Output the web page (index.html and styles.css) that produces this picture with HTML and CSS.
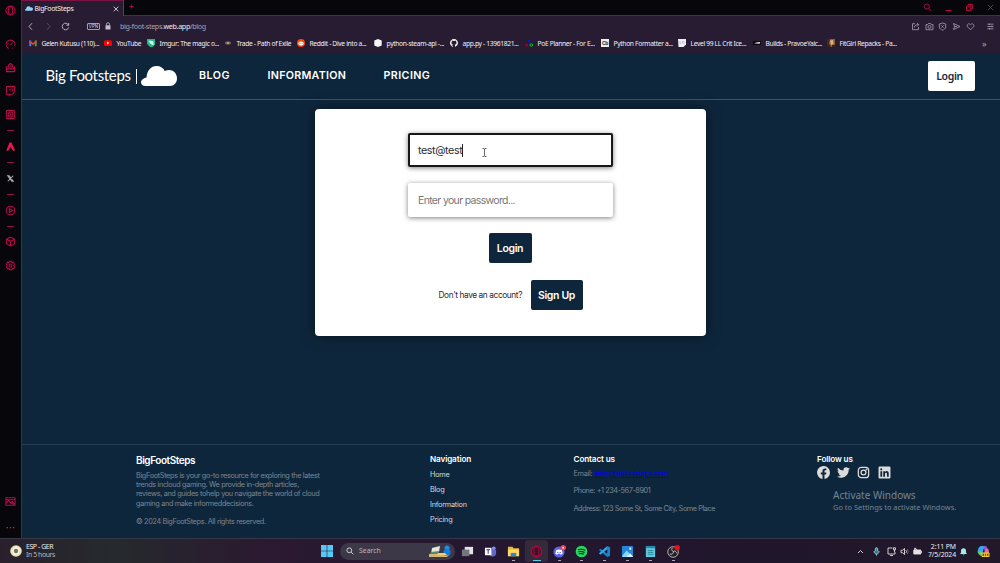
FILE: index.html
```html
<!DOCTYPE html>
<html lang="en">
<head>
<meta charset="utf-8">
<title>BigFootSteps</title>
<link rel="stylesheet" href="styles.css">
</head>
<body>
<div class="desktop">
  <div class="browser">
    <aside class="sidebar">
      <svg class="ic opera" viewBox="0 0 12 12"><circle cx="6" cy="6" r="5"/><ellipse cx="6" cy="6" rx="2.4" ry="4.2"/></svg>
      <svg class="ic gauge" viewBox="0 0 12 12"><path d="M4 10.3A4.8 4.8 0 1 1 10.4 8M6 6.5 8.2 4M3 6.3l.6-1.5M7.5 10.2l1-.5"/></svg>
      <svg class="ic bag" viewBox="0 0 12 12"><path d="M1.500 5.500h9v5h-9zM1 7.500h10M4 5.500V3l2-1.500L8 3v2.500M5 3.500h2"/></svg>
      <svg class="ic twitch" viewBox="0 0 12 12"><path d="M2 1.500h8.500v6L8 10H6l-1.500 1.500V10H1.500V3zM5.500 3.500v3M8 3.500v3"/></svg>
      <svg class="ic cam" viewBox="0 0 12 12"><rect x="1.500" y="1.500" width="9" height="9" rx="1.500"/><circle cx="6" cy="6" r="2.600"/><circle cx="6" cy="6" r=".7"/><path d="M3 3h.2M9 3h.2M3 9h.2M9 9h.2"/></svg>
      <i class="dash d1"></i>
      <svg class="ic arrowup" viewBox="0 0 12 12"><path class="solid" d="M5 1.500h2l4 8.500-2 .8L6 6.500 3.300 10.800 1.500 10z"/></svg>
      <i class="dash d2"></i>
      <svg class="ic xlogo" viewBox="0 0 12 12"><path d="M3 3h1.500L9 9H7.500zM9 3 3 9"/></svg>
      <i class="dash d3"></i>
      <svg class="ic player" viewBox="0 0 12 12"><circle cx="6" cy="6" r="4.700"/><path d="M4.700 3.900v4.200L8.500 6z"/></svg>
      <i class="dash d4"></i>
      <svg class="ic cube" viewBox="0 0 12 12"><path d="M6 1.200 10.500 3.500v5L6 10.800 1.500 8.500v-5zM1.500 3.500 6 5.800l4.500-2.300M6 5.800v5"/></svg>
      <svg class="ic gear" viewBox="0 0 12 12"><path d="M4.800 1.300h2.400l.5 1.500 1.600-.3 1.200 2L9.500 6l1 1.500-1.200 2-1.600-.3-.5 1.500H4.800l-.5-1.500-1.600.3-1.200-2 1-1.500-1-1.500 1.200-2 1.600.3z"/><circle cx="6" cy="6" r="1.600"/></svg>
      <svg class="ic photos" viewBox="0 0 12 12"><path d="M1 2h10v8H1zM1 4h10M1 8l3-3 2.500 3L8 6l3 3M6.500 6.500l3 3"/></svg>
      <svg class="ic more" viewBox="0 0 12 12"><path class="solid" d="M1.800 5.500h1.400v1.200H1.800zM5.300 5.500h1.400v1.200H5.300zM8.800 5.500h1.400v1.200H8.800z"/></svg>
    </aside>

    <div class="window">
      <div class="tabstrip">
        <div class="tab">
          <svg class="tabcloud" viewBox="0 0 36 20"><use href="#cloud"/></svg>
          <span class="tabname">BigFootSteps</span>
          <svg class="close" viewBox="0 0 6 6"><path d="M.7.7l4.600 4.600M5.300.7.7 5.300"/></svg>
        </div>
        <svg class="plus" viewBox="0 0 6 6"><path d="M3 .5v5M.5 3h5"/></svg>
        <div class="wincontrols">
          <svg viewBox="0 0 9 9"><circle cx="3.800" cy="3.500" r="2.500"/><path d="M5.700 5.400 8.200 8"/></svg>
          <svg viewBox="0 0 9 9"><path d="M1.500 7.500h6"/></svg>
          <svg viewBox="0 0 9 9"><path d="M1.500 3.300h4.200v4.200H1.500zM3 3V1.500h4.500V6H6"/></svg>
          <svg viewBox="0 0 9 9"><path d="M1.700 1.700l5.600 5.600M7.300 1.700 1.700 7.300"/></svg>
        </div>
      </div>

      <div class="toolbar">
        <svg class="nv back" viewBox="0 0 9 9"><path d="M6 1.200 3 4.500 6 7.800"/></svg>
        <svg class="nv fwd" viewBox="0 0 9 9"><path d="M3 1.200 6 4.500 3 7.800"/></svg>
        <svg class="nv reload" viewBox="0 0 9 9"><path d="M7.500 3A3.300 3.300 0 1 0 7.700 5.500M7.700 1v2.300H5.400"/></svg>
        <span class="vpn">VPN</span>
        <svg class="lock" viewBox="0 0 6 8"><path d="M1.500 3.500V2.200a1.500 1.500 0 0 1 3 0v1.300"/><path class="body" d="M.5 3.300h5v4.200h-5z"/></svg>
        <span class="url">big-foot-steps.<b>web.app</b>/blog</span>
        <div class="tools">
          <svg viewBox="0 0 9 9"><path d="M4 1.700H1.500v6h6V5M3.500 5.500c0-2 1-2.800 4-2.800M6 1l1.700 1.700L6 4.500"/></svg>
          <svg viewBox="0 0 9 9"><path d="M1 2.500h1.700l.7-1h2.200l.7 1H8v5.200H1z"/><circle cx="4.500" cy="4.900" r="1.500"/></svg>
          <svg viewBox="0 0 9 9"><path d="M4.500 1 7.700 2v3c0 1.700-2 2.700-3.200 3.200C3.300 7.700 1.300 6.700 1.300 5V2zM3.400 3.400l2.200 2.200M5.600 3.400 3.400 5.600"/></svg>
          <svg viewBox="0 0 9 9"><path d="M1.500 1.500 8 4.500 1.500 7.500 2.500 4.500zM2.500 4.500H5"/></svg>
          <svg viewBox="0 0 9 9"><path d="M4.500 7.800 1.500 4.800C.2 3.300 2.500.3 4.500 2.700 6.500.3 8.800 3.300 7.500 4.800z"/></svg>
          <svg class="menu" viewBox="0 0 9 9"><path d="M1.500 2.200h6M1.500 4.500h6M1.500 6.800h6M3 1.500v1.400M6 3.800v1.400M3.500 6.100v1.400"/></svg>
        </div>
      </div>

      <div class="bookmarks">
        <div class="bm"><svg viewBox="0 0 8 8"><path d="M.3 1.500h1.900v5.700H.3z" fill="#4285f4"/><path d="M5.800 1.500h1.900v5.700H5.800z" fill="#34a853"/><path d="M.3 1.300 4 4l3.700-2.700v2L4 6 .3 3.300z" fill="#ea4335"/></svg><span>Gelen Kutusu (110)...</span></div>
        <div class="bm"><svg viewBox="0 0 8 8"><rect y="1.200" width="8" height="5.800" rx="1.500" fill="#f00"/><path d="M3 2.700v2.700l2.400-1.300z" fill="#fff"/></svg><span>YouTube</span></div>
        <div class="bm"><svg viewBox="0 0 8 8"><path d="M0 0h8v5.500L5.500 8H3L0 5z" fill="#20b88a"/><path d="M1.300 2 3 1.500l3.500 1v4L3.500 4.700z" fill="#d8f5e9"/></svg><span>Imgur: The magic o...</span></div>
        <div class="bm"><svg viewBox="0 0 8 8"><ellipse cx="4" cy="4" rx="3" ry="1.700" fill="#7b6656"/><circle cx="4" cy="4" r="1" fill="#b8a893"/></svg><span>Trade - Path of Exile</span></div>
        <div class="bm"><svg viewBox="0 0 8 8"><circle cx="4" cy="4" r="4" fill="#ff4500"/><ellipse cx="4" cy="4.500" rx="2.700" ry="1.900" fill="#fff"/><path d="M2.400 4h1v.8h-1zM4.600 4h1v.8h-1z" fill="#f40"/></svg><span>Reddit - Dive into a...</span></div>
        <div class="bm"><svg viewBox="0 0 8 8"><path d="m4 0 3.700 1.600v4.800L4 8 .3 6.400V1.600z" fill="#f5f5f7"/></svg><span>python-steam-api -...</span></div>
        <div class="bm"><svg viewBox="0 0 16 16"><path fill="#fff" d="M8 0C3.580 0 0 3.580 0 8c0 3.540 2.290 6.530 5.470 7.590.4.070.55-.17.55-.38v-1.490c-2.230.49-2.700-1.070-2.700-1.070-.36-.92-.89-1.170-.89-1.170-.73-.5.050-.49.050-.49.800.060 1.230.83 1.230.83.720 1.220 1.870.87 2.330.66.070-.52.280-.87.510-1.070-1.780-.2-3.640-.89-3.640-3.950 0-.87.310-1.590.82-2.150-.08-.2-.36-1.020.08-2.120 0 0 .67-.21 2.200.82a7.500 7.500 0 0 1 4 0c1.530-1.040 2.200-.82 2.200-.82.44 1.100.16 1.920.08 2.120.51.560.82 1.270.82 2.150 0 3.070-1.870 3.750-3.650 3.950.29.250.54.730.54 1.480v2.200c0 .21.150.46.550.38A8 8 0 0 0 16 8c0-4.420-3.580-8-8-8z"/></svg><span>app.py - 13961821...</span></div>
        <div class="bm"><svg viewBox="0 0 8 8"><circle cx="1.700" cy="6" r="1.500" fill="#a00020"/><circle cx="4.200" cy="2" r="1.600" fill="#1515b0"/><circle cx="6.300" cy="6" r="1.300" fill="none" stroke="#00c030"/></svg><span>PoE Planner - For E...</span></div>
        <div class="bm"><span class="cb">Cb</span><span>Python Formatter a...</span></div>
        <div class="bm"><svg viewBox="0 0 8 8"><path d="M0 0h8v5.500L5.500 8H.5z" fill="#efeff3"/><path d="M2 2v2.500h1M4.500 2v2.500M6 2v2.500" stroke="#aaa" stroke-width=".6" fill="none"/></svg><span>Level 99 LL Crit Ice...</span></div>
        <div class="bm"><svg viewBox="0 0 8 8"><path d="M0 2h8v4H0z" fill="#09090c"/><path d="M1 4.300 3.500 3.500 7.300 3 6.500 4.700z" fill="#fff"/></svg><span>Builds - PravoeYaic...</span></div>
        <div class="bm"><svg viewBox="0 0 8 8"><path d="M0 0h8v8H1z" fill="#8d603b"/><path d="M3 1.500 6 1l.5 4L4 6z" fill="#e2b07e"/><path d="M0 0h3L2 4.500 4 8H1zM5 6h3v2H5z" fill="#3b241c"/></svg><span>FitGirl Repacks - Pa...</span></div>
        <span class="overflow">»</span>
      </div>

      <div class="page">
        <header class="site-header">
          <div class="brand"><span class="brandname">Big Footsteps</span><i class="bar"></i>
            <svg class="cloud" viewBox="0 0 36 20"><g id="cloud"><path d="M4.500 20C1.800 20 0 18.400 0 16.300 0 14.200 2 12.300 5.500 11.500 6 4.500 10 0 15.500 0c4 0 7 2 8.300 5 6-3 12.200 1 12.200 7.300 0 4.700-3 7.700-7 7.700z"/></g></svg>
          </div>
          <nav class="nav"><a class="n1">BLOG</a><a class="n2">INFORMATION</a><a class="n3">PRICING</a></nav>
          <button class="header-login">Login</button>
        </header>

        <main class="main">
          <form class="card">
            <div class="field focused"><span class="email">test@test</span><i class="caret"></i>
              <svg class="ibeam" viewBox="0 0 5 9"><path d="M.5.500h1.500l.5.500.5-.5h1.500M2.500 1v7M.5 8.500H2l.5-.5.5.5h1.500"/></svg>
            </div>
            <div class="field"><span class="placeholder">Enter your password...</span></div>
            <button class="btn login" type="button">Login</button>
            <div class="signup"><span class="ask">Don't have an account?</span><button class="btn up" type="button">Sign Up</button></div>
          </form>
        </main>

        <footer class="site-footer">
          <section class="about">
            <h2>BigFootSteps</h2>
            <p>BigFootSteps is your go-to resource for exploring the latest<br>trends incloud gaming. We provide in-depth articles,<br>reviews, and guides tohelp you navigate the world of cloud<br>gaming and make informeddecisions.</p>
            <p class="copy">© 2024 BigFootSteps. All rights reserved.</p>
          </section>
          <section class="links"><h3>Navigation</h3><a>Home</a><a>Blog</a><a>Information</a><a>Pricing</a></section>
          <section class="contact"><h3>Contact us</h3><p>Email: <a>info@bigfootsteps.com</a></p><p class="phone">Phone: +1 234-567-8901</p><p class="addr">Address: 123 Some St, Some City, Some Place</p></section>
          <section class="follow"><h3>Follow us</h3>
            <div class="social">
              <svg viewBox="0 0 24 24"><path d="M24 12a12 12 0 1 0-13.900 11.900v-8.400H7.100V12h3V9.400c0-3 1.800-4.700 4.500-4.700 1.300 0 2.700.2 2.700.2v3h-1.500c-1.500 0-2 .9-2 1.900V12h3.400l-.6 3.500h-2.800v8.400A12 12 0 0 0 24 12z"/></svg>
              <svg viewBox="0 0 24 24"><path d="M24 4.600a10 10 0 0 1-2.800.8 5 5 0 0 0 2.200-2.700 10 10 0 0 1-3.100 1.200 4.900 4.900 0 0 0-8.400 4.500A14 14 0 0 1 1.700 3.200a4.900 4.900 0 0 0 1.500 6.500 5 5 0 0 1-2.200-.6 4.900 4.900 0 0 0 4 4.900 5 5 0 0 1-2.300.1 4.900 4.900 0 0 0 4.600 3.400A10 10 0 0 1 0 19.500 14 14 0 0 0 21.500 7.100 10 10 0 0 0 24 4.600z"/></svg>
              <svg class="insta" viewBox="0 0 24 24"><rect x="2.500" y="2.500" width="19" height="19" rx="5.500"/><circle cx="12" cy="12" r="4.500"/><circle cx="17.500" cy="6.500" r=".6"/></svg>
              <svg viewBox="0 0 24 24"><path fill-rule="evenodd" d="M3 1h18a2 2 0 0 1 2 2v18a2 2 0 0 1-2 2H3a2 2 0 0 1-2-2V3a2 2 0 0 1 2-2zm1.400 8.500v10.300h3.300V9.500zM6 4.300a1.900 1.900 0 1 0 0 3.800 1.900 1.900 0 0 0 0-3.800zm3.700 5.200v10.300H13v-5.100c0-3.300 3.600-3.100 3.600 0v5.100h3.200v-6.200c0-5-5-5.400-6.800-2.700V9.500z"/></svg>
            </div>
          </section>
        </footer>
        <div class="watermark"><div class="w1">Activate Windows</div><div class="w2">Go to Settings to activate Windows.</div></div>
      </div>
    </div>
  </div>

  <div class="taskbar">
    <div class="widget"><svg viewBox="0 0 12 12"><circle cx="6" cy="6" r="5.800" fill="#e9e2b8"/><path d="M6 1 10 4 9 9 4 10 1.500 6z" fill="#f9f5dc"/><circle cx="6" cy="6" r="2.200" fill="#77736b"/></svg><div><div class="match">ESP - GER</div><div class="when">In 5 hours</div></div></div>
    <div class="apps">
      <svg class="start" viewBox="0 0 12 12"><path fill="#56c8f5" d="M0 0h5.700v5.700H0zM6.300 0H12v5.700H6.300zM0 6.300h5.700V12H0zM6.300 6.300H12V12H6.300z"/></svg>
      <div class="search"><svg class="mag" viewBox="0 0 9 9"><circle cx="3.700" cy="3.700" r="2.700"/><path d="M5.800 5.800 8.200 8.200"/></svg><span>Search</span><svg class="art" viewBox="0 0 24 13"><path d="M1 9h21l-3 3H1z" fill="#d5b678"/><path d="M4 3l8-2-1 6-8 2z" fill="#e8e5d9"/><path d="M3 7l8-1-1 3H2z" fill="#568a73"/><circle cx="19" cy="3" r="2.500" fill="#1c8fe9"/><rect x="15.500" y="4.500" width="7" height="6" rx="2" fill="#147bdd"/><path d="M10 8h7l2 2H9z" fill="#f5cf68"/></svg></div>
      <div class="app"><svg viewBox="0 0 14 14"><path d="M4 2h9v8H4z" fill="#e3e3e5"/><path d="M1 5h8v7H1z" fill="#77767e"/></svg></div>
      <div class="app"><svg viewBox="0 0 14 14"><circle cx="10.500" cy="3.500" r="2" fill="#8b8df0"/><path d="M6 5h7v4c0 4-6 5-7 1z" fill="#6268ca"/><path d="M1 3h7v8H1z" fill="#fff"/><path d="M2.700 5h3.600M4.500 5v4.500" stroke="#494fae" stroke-width="1.200"/></svg></div>
      <div class="app run"><svg viewBox="0 0 14 14"><path d="M1 2h5l1 1.500h6V12H1z" fill="#efb936"/><path d="M1 5h12v7H1z" fill="#ffd862"/><path d="M4 8.500h6V12H4z" fill="#2987dc"/></svg></div>
      <div class="app run active"><svg viewBox="0 0 14 14"><circle cx="7" cy="7" r="5.700" fill="#45122c" stroke="#a40d43" stroke-width="1.300"/><ellipse cx="7" cy="7" rx="2.700" ry="4.700" fill="#391327" stroke="#a40d43"/></svg></div>
      <div class="app run"><svg viewBox="0 0 14 14"><circle cx="6.500" cy="7.500" r="6" fill="#5865e8"/><path d="M3.500 5.500Q6.500 4 9.500 5.500l1 4-2 1-1-1h-2l-1 1-2-1z" fill="#fff"/><circle cx="5.200" cy="8" r=".7" fill="#5865e8"/><circle cx="7.800" cy="8" r=".7" fill="#5865e8"/><circle cx="11" cy="3" r="3" fill="#ef4050"/><circle cx="11" cy="3" r="1" fill="#fff"/></svg></div>
      <div class="app run"><svg viewBox="0 0 14 14"><circle cx="7" cy="7" r="6.300" fill="#20d760"/><path d="M3.200 5.200q4-1.300 7.800.6M3.700 7.400q3.300-1 6.500.6M4.200 9.400q2.700-.7 5.200.5" stroke="#111" fill="none" stroke-width="1.100"/></svg></div>
      <div class="app run"><svg viewBox="0 0 14 14"><path fill-rule="evenodd" d="M10 1l3 1.500v9L10 13 1 5.500 2.500 4 10 9.500z" fill="#1687cf"/><path d="M10 1v3.500L2.500 10.500 1 9z" fill="#35a8ee"/></svg></div>
      <div class="app run"><svg viewBox="0 0 14 14"><rect x="1" y="1" width="12" height="12" rx="1" fill="#2585d8"/><path d="M1 12l5-6 7 7H2z" fill="#86d7fa"/><path d="M6 13l4-4 3 4z" fill="#d8f5ff"/><circle cx="10" cy="4" r="1.200" fill="#fff"/></svg></div>
      <div class="app run"><svg viewBox="0 0 14 14"><path d="M2 2h10v11H2z" fill="#62c8df"/><path d="M2 1h10v2.500H2z" fill="#268aa7"/><path d="M4 6h6M4 8h6M4 10h6" stroke="#197990" stroke-width=".8"/></svg></div>
      <div class="app run"><svg viewBox="0 0 14 14"><circle cx="6.500" cy="7.500" r="5.700" fill="#222127" stroke="#bbb" stroke-width="1"/><path d="M6 3c-2 2 0 4 1 4M3 10c3 0 4-1 4-3M10.500 9c-1-3-3-3-4-1.500" stroke="#ccc" fill="none"/><circle cx="11" cy="3" r="2.900" fill="#f20b18"/></svg></div>
    </div>
    <div class="tray">
      <svg class="chev" viewBox="0 0 9 9"><path d="M2 6l2.500-2.500L7 6"/></svg>
      <svg class="mic" viewBox="0 0 9 9"><rect x="3.300" y=".7" width="2.400" height="4.800" rx="1.200"/><path d="M2 4c0 4 5 4 5 0M4.500 7v1.700"/></svg>
      <svg class="net" viewBox="0 0 9 9"><path d="M8 5v2H1V1h4.500M3 8.500h3M6.500.800h2v2h-2zM7.500 3v2"/></svg>
      <svg class="vol" viewBox="0 0 9 9"><path d="M1 3.300h1.500L4.500 1.500v6l-2-1.800H1zM6 3.200q1 1.300 0 2.600"/><path opacity=".4" d="M7.300 2q2 2.500 0 5"/></svg>
      <svg class="bat" viewBox="0 0 9 9"><path d="M.8 3h7v4h-7zM8.300 4v2M1 1l3 2M3 .8 1.500 3"/></svg>
      <div class="clock"><div class="time">2:11 PM</div><div class="date">7/5/2024</div></div>
      <svg class="bell" viewBox="0 0 9 9"><path d="M1 7l1-1.500V3.700a2.500 2.500 0 0 1 5 0v1.800L8 7zM3.500 7.500h2l-1 1z"/></svg>
      <svg class="copilot" viewBox="0 0 14 14"><path d="M4 1h4L6 9H1C0 5 2 2 4 1z" fill="#36a5e9"/><path d="M7 1h3l2 5H8z" fill="#825be2"/><path d="M9 4h3c2 4 0 6-2 7H7z" fill="#f16799"/><path d="M1 7h5l-1 5C2 11 1 9 1 7z" fill="#5dd36e"/><rect x="5" y="8" width="8.500" height="5" rx="1" fill="#f5c832"/><path d="M6 9.500h1.500v2H6zM8.500 9.500h1.200v2H8.500zM10.800 9.500h1.500v2h-1.500z" fill="#54450b"/></svg>
    </div>
  </div>
</div>
</body>
</html>
```

FILE: styles.css
```css
* { box-sizing: border-box; }
body { margin: 0; width: 1000px; height: 563px; overflow: hidden; background: #07060b; font-family: Inter, "Liberation Sans", sans-serif; }
svg { display: block; flex: none; overflow: visible; }
span, a { white-space: nowrap; }
h2, h3, p { margin: 0; }
button { border: 0; font-family: inherit; padding: 0; }
.desktop { display: flex; flex-direction: column; height: 563px; }
.browser { display: flex; height: 538px; }

.sidebar { width: 21px; flex: none; display: flex; flex-direction: column; align-items: center; padding-top: 5px; background: #07060b; }
.ic { width: 11px; height: 11px; fill: none; stroke: #b80e48; stroke-width: 1.100; }
.ic .solid { fill: #ee1451; stroke: none; }
.gauge { margin-top: 23px; }
.bag { margin-top: 12px; }
.twitch { margin-top: 12px; }
.cam { margin-top: 13px; }
.dash { width: 7px; height: 1px; background: #94103f; flex: none; }
.d1 { margin-top: 10px; }
.arrowup { margin-top: 10px; }
.d2 { margin-top: 10px; }
.xlogo { margin-top: 10px; stroke: #b4b7bb; }
.d3 { margin-top: 10px; }
.player { margin-top: 10px; }
.d4 { margin-top: 10px; }
.cube { margin-top: 9px; }
.gear { margin-top: 13px; }
.photos { margin-top: 225px; }
.more { margin-top: 15px; }

.window { flex: 1; min-width: 0; border-left: 1px solid #7d1244; display: flex; flex-direction: column; }
.tabstrip { height: 16px; display: flex; align-items: flex-start; border-bottom: 1px solid #7d1244; }
.tab { width: 102px; height: 16px; background: #271c31; border-right: 1px solid #b01351; border-top: 1px solid #7d1244; display: flex; align-items: center; padding-left: 3px; }
.tabcloud { width: 8px; height: 5px; fill: #91d2f7; }
.tabname { font: 6.900px "Noto Sans", sans-serif; color: #f5f2f8; margin-left: 1.500px; width: 78px; letter-spacing: -.3px; }
.close { width: 6px; height: 6px; stroke: #d5d0dc; fill: none; stroke-width: .9; }
.plus { width: 5px; height: 5px; margin: 4px 0 0 5px; stroke: #a80d42; }
.wincontrols { margin: 3px 5.500px 0 auto; display: flex; gap: 12px; }
.wincontrols svg { width: 9px; height: 9px; fill: none; stroke: #b30b42; }

.toolbar { height: 20px; background: #271c31; display: flex; align-items: center; padding-left: 4px; }
.nv { width: 9px; height: 9px; fill: none; stroke: #c3bdca; stroke-width: .9; }
.fwd { margin-left: 9px; stroke: #5d5268; }
.reload { margin-left: 8px; }
.vpn { margin-left: 17px; width: 13px; height: 7px; border: 1px solid #a39cab; border-radius: 1px; font: 4.500px/5px Inter, sans-serif; color: #d7d1dc; text-align: center; }
.lock { width: 6px; height: 8px; margin-left: 4.500px; fill: none; stroke: #c3bdca; stroke-width: .8; }
.lock .body { fill: #c3bdca; stroke: none; }
.url { margin-left: 9.500px; font: 7.200px "Noto Sans", sans-serif; color: #aaa3b2; letter-spacing: -.36px; }
.url b { font-weight: 400; color: #f0edf3; }
.tools { margin: 0 5.500px 0 auto; display: flex; gap: 4.700px; }
.tools svg { width: 9px; height: 9px; fill: none; stroke: #aaa2b3; stroke-width: .8; }
.tools .menu { margin-left: 6px; }

.bookmarks { height: 17px; background: #271c31; display: grid; grid-template-columns: 75px 43px 77px 73px 77px 76px 75px 76px 77px 75px 74px 155px auto; align-items: center; padding: 0 0 3px 7px; }
.bm { display: flex; align-items: center; font: 6.700px/9px "Noto Sans", sans-serif; color: #f4f1f7; letter-spacing: -.34px; }
.bm svg { width: 8px; height: 8px; margin-right: 4.500px; }
.cb { width: 8px; height: 8px; margin-right: 4.500px; background: #eee; color: #333; font: bold 5px/8px Inter, sans-serif; text-align: center; }
.overflow { color: #aaa3b2; font: 9px/9px "Noto Sans", sans-serif; }

.page { flex: 1; min-height: 0; position: relative; background: #0e263c; display: flex; flex-direction: column; }
.site-header { height: 47px; border-bottom: 1px solid #3e5367; display: flex; align-items: center; padding: 0 25px 0 24px; }
.brand { display: flex; align-items: center; color: #fff; width: 131px; }
.brandname { font: 400 15px/20px Lato, sans-serif; width: 89px; letter-spacing: -.34px; padding-bottom: 2px; margin-left: -.5px; }
.bar { width: 1px; height: 15px; background: #fff; margin: 1px 4px 0 1px; }
.cloud { width: 36px; height: 20px; fill: #fff; }
.nav { display: flex; margin-left: 22px; color: #fff; font: 600 10.700px/16px Inter, sans-serif; letter-spacing: .28px; }
.n1 { width: 68.500px; letter-spacing: .5px; }
.n2 { width: 116px; }
.n3 { letter-spacing: .42px; }
.header-login { margin-left: auto; width: 47px; height: 30px; border-radius: 2px; background: #fff; color: #17293d; font: 600 10.500px/30px "Noto Sans", sans-serif; letter-spacing: -.35px; padding-right: 4px; }

.main { height: 344px; display: flex; justify-content: center; padding: 8.500px 2px 0 0; }
.card { width: 391px; height: 227px; background: #fff; border-radius: 4px; box-shadow: 0 0 14px rgba(0,0,0,.5); display: flex; flex-direction: column; align-items: center; padding-top: 24.500px; }
.field { width: 205px; height: 34px; flex: none; border-radius: 2px; background: #fff; box-shadow: 0 1px 5px rgba(0,0,0,.5); display: flex; align-items: center; padding-left: 10.500px; font-size: 10.700px; color: #777; margin-bottom: 16px; }
.focused { border: 2px solid #16181c; padding-left: 8.500px; color: #292b30; }
.email { letter-spacing: -.4px; }
.caret { width: 1px; height: 13px; background: #222; }
.ibeam { width: 5px; height: 9px; margin: 4px 0 0 19px; fill: none; stroke: #444; stroke-width: .8; }
.placeholder { font-size: 10.500px; letter-spacing: -.66px; }
.btn { height: 30px; border-radius: 2px; background: #0e263c; color: #fff; font: 600 10.500px/31px Inter, sans-serif; letter-spacing: -.35px; }
.login { width: 43px; }
.signup { display: flex; align-items: center; margin-top: 17px; padding-left: 1px; }
.ask { font-size: 8.300px; color: #272b30; letter-spacing: -.4px; margin-right: 8.500px; }
.up { width: 52px; }

.site-footer { height: 94px; border-top: 1px solid #263e53; display: grid; grid-template-columns: 294px 143.500px 243.500px auto; padding: 8.500px 0 0 114px; color: #e9ecef; }
.about h2 { font: 600 10px/12px Inter, sans-serif; letter-spacing: -.44px; color: #fff; }
.about p { font-size: 7.300px; line-height: 9.350px; color: #7b8792; margin-top: 5px; letter-spacing: -.34px; white-space: nowrap; }
.about .copy { margin-top: 9px; }
.site-footer h3 { font: 600 8.200px/11px Inter, sans-serif; color: #fff; letter-spacing: -.15px; }
.links { display: flex; flex-direction: column; font-size: 7.300px; letter-spacing: -.23px; }
.links a { line-height: 15.100px; color: #d6dade; }
.links h3 { margin-bottom: 2.500px; }
.contact p { font-size: 7.300px; line-height: 9px; margin-bottom: 8.700px; color: #7b8792; letter-spacing: -.3px; white-space: nowrap; }
.contact .addr { letter-spacing: -.42px; }
.contact .phone { letter-spacing: -.42px; }
.contact h3 { margin-bottom: 4.300px; }
.contact a { color: #0000ee; text-decoration: underline; }
.social { display: flex; gap: 7.200px; margin-top: 1px; }
.social svg { width: 13px; height: 13px; fill: #dcdcdc; }
.social .insta { fill: none; stroke: #dcdcdc; stroke-width: 2.300; }
.watermark { position: absolute; left: 811px; top: 435px; color: #778491; font-family: "Noto Sans", sans-serif; white-space: nowrap; }
.w1 { font-size: 10px; line-height: 14px; }
.w2 { font-size: 7.450px; line-height: 10px; }

.taskbar { height: 25px; border-top: 1px solid #363746; background: linear-gradient(90deg, #29202c 0, #252a2d 11%, #2b1a30 25%, #251731 50%, #20162c 75%, #21192a 100%); display: flex; align-items: center; font: 6.900px/8px "Noto Sans", sans-serif; color: #eee; }
.widget { width: 321px; padding-left: 10px; display: flex; gap: 4px; letter-spacing: -.4px; }
.widget svg { width: 12px; height: 12px; margin-top: 2px; }
.when { color: #bbb7be; }
.apps { display: flex; align-items: center; }
.start { width: 12px; height: 12px; }
.search { margin-left: 7px; width: 115px; height: 17px; border-radius: 9px; background: #3c3847; display: flex; align-items: center; padding-left: 6px; color: #bbb7c1; }
.mag { width: 8px; height: 8px; fill: none; stroke: #ddd; margin-right: 5px; }
.art { width: 24px; height: 13px; margin-left: auto; margin-right: 3px; }
.app { width: 22.900px; height: 22px; display: flex; align-items: center; justify-content: center; position: relative; border-radius: 3px; }
.search + .app { margin-left: 1px; }
.app svg { width: 13px; height: 13px; }
.run::after { content: ""; position: absolute; left: 10px; bottom: 1px; width: 3px; height: 1px; background: #aaa5ae; }
.active { background: #342b3a; }
.active::after { left: 8px; width: 8px; background: #5cc9ed; }
.tray { margin-left: auto; display: flex; align-items: center; padding-right: 10px; letter-spacing: -.1px; }
.tray svg { width: 9px; height: 9px; fill: none; stroke: #e3e1e5; stroke-width: .9; }
.tray .chev { margin-right: -1px; }
.tray .mic { margin-left: 8px; margin-right: -1px; fill: #397885; stroke: #93d5d3; }
.tray .net { margin-left: 7px; }
.tray .vol { margin-left: 4px; }
.tray .bat { margin-left: 4px; fill: #e3e1e5; }
.clock { text-align: right; width: 34px; }
.tray .bell { margin-left: 3px; fill: #a2ebeb; stroke: none; }
.tray .copilot { width: 13px; height: 13px; margin-left: 9px; stroke: none; }
```
